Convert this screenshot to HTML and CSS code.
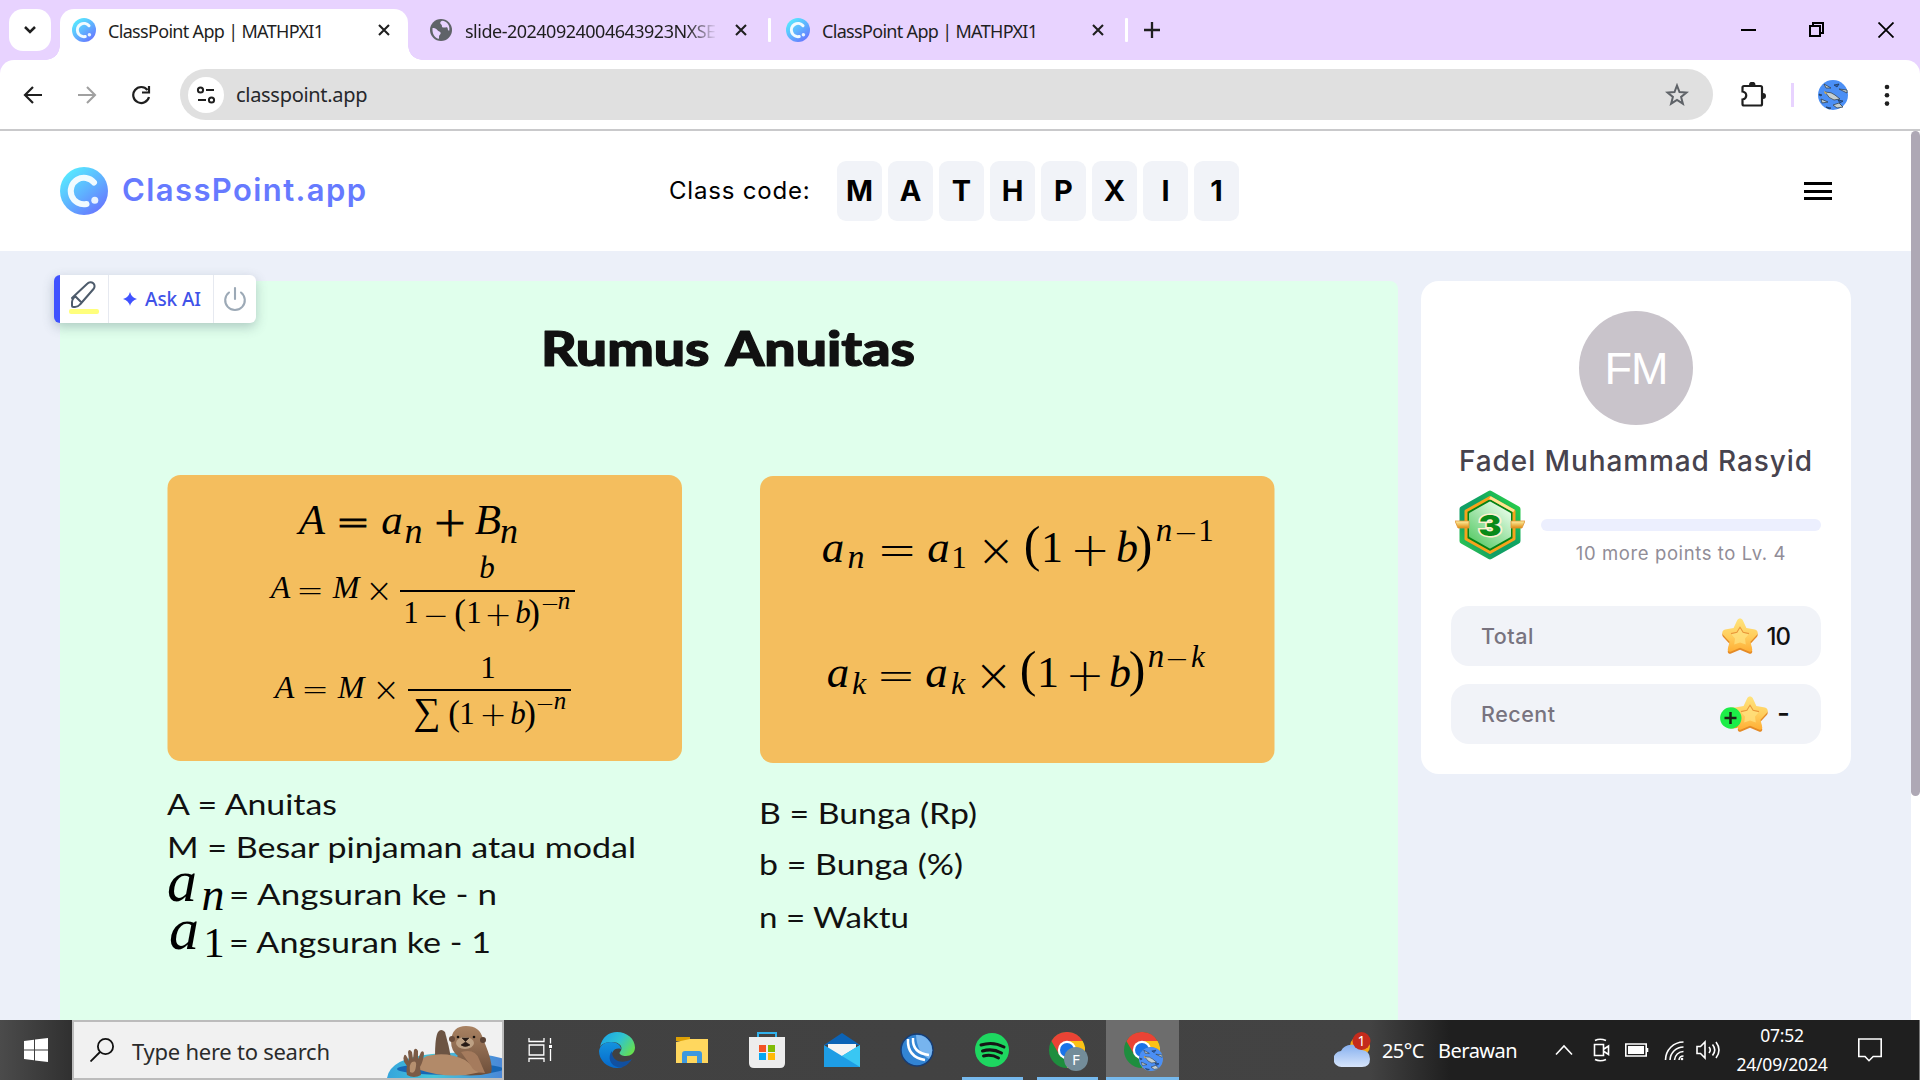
FILE: index.html
```html
<!DOCTYPE html>
<html lang="id">
<head>
<meta charset="utf-8">
<title>ClassPoint App | MATHPXI1</title>
<link rel="stylesheet" href="styles.css">
</head>
<body>
<svg class="defs" aria-hidden="true">
  <defs>
    <linearGradient id="cpGrad" x1="0.15" y1="0.1" x2="0.85" y2="0.95"><stop offset="0" stop-color="#57e9ff"/><stop offset="0.5" stop-color="#5fb2ff"/><stop offset="1" stop-color="#6774ff"/></linearGradient>
    <linearGradient id="starGrad" x1="0" y1="0" x2="0" y2="1"><stop offset="0" stop-color="#ffe37c"/><stop offset="0.55" stop-color="#ffcd5c"/><stop offset="1" stop-color="#ffae35"/></linearGradient>
    <symbol id="logo" viewBox="0 0 48 48"><circle cx="24" cy="24" r="24" fill="url(#cpGrad)"/><path d="M34 15.5A13.2 13.2 0 1 0 26.5 37" fill="none" stroke="#f1fbff" stroke-width="6" stroke-linecap="round"/><circle cx="34.8" cy="33.3" r="3.5" fill="#e9f3ff"/></symbol>
    <symbol id="cross" viewBox="0 0 12 12"><path d="M1 1l10 10M11 1L1 11" stroke="#1f1f1f" stroke-width="2.1" fill="none"/></symbol>
    <symbol id="star" viewBox="0 0 36 36"><path d="M15.200 4.200c1.200-2.300 4.400-2.300 5.600 0l3.600 7.700 8.500 1.500c2.700.6 3.700 3.500 1.900 5.500l-6.300 6.900 1.700 7.200c.3 2-1.500 3.300-3.300 2.600L18 31.700l-8.900 3.900c-1.800.7-3.600-.6-3.300-2.600l1.700-7.200-6.300-6.900c-1.800-2-.8-4.900 1.900-5.500l8.500-1.500z" fill="#e48a26"/><path d="M15.200 2.200c1.200-2.300 4.400-2.300 5.600 0l3.600 7.700 8.500 1.500c2.700.6 3.700 3.500 1.900 5.500l-6.300 6.900 1.700 7.200c.3 2-1.500 3.300-3.300 2.600L18 29.700l-8.900 3.900c-1.800.7-3.600-.6-3.300-2.600l1.700-7.200-6.300-6.900c-1.800-2-.8-4.900 1.900-5.500l8.500-1.500z" fill="url(#starGrad)"/><path d="M18 9l3.200 5.600 6 1.200-4.200 4.800.8 6L18 24.400l-5.800 2.200.8-6-4.200-4.800 6-1.200z" fill="#ffe27f" opacity=".75"/><path d="M9 15.600l5.900-1.300L18 9.300l3.100 5 5.900 1.300" fill="none" stroke="#e9983a" stroke-width="1.100"/></symbol>
    <symbol id="chrome" viewBox="0 0 36 36"><circle cx="18" cy="18" r="18" fill="#1e8e3e"/><path d="M2.400 9A18 18 0 0 1 33.600 9L18 10 10.200 22.500z" fill="#ea4335"/><path d="M33.600 9A18 18 0 0 1 18 36l7.800-13.500L18 9z" fill="#fbc116"/><circle cx="18" cy="18" r="9.200" fill="#fff"/><circle cx="18" cy="18" r="7" fill="#1a73e8"/></symbol>
    <symbol id="sharks" viewBox="0 0 30 30"><circle cx="15" cy="15" r="15" fill="#4b8ff5"/><path d="M7 12q7 0 10 3l5 4-6 1q-5-1-9-8zM6 4l7 4-5 0zM21 9l8 1v3zM3 19l7 3-6 1zM15 25l6-2 4 4-6 1z" fill="#c3ced1" stroke="#345" stroke-width=".8"/><path d="M16 5l5-1-2 3zM20 20l5 1-3 2zM1 14l3 1-2 1zM8 27l5 1-2 1z" fill="#2563c9" stroke="#234" stroke-width=".7"/><path d="M6 11l3 2-2 1z" fill="#e8b13c"/></symbol>
  </defs>
</svg>

<header class="browser">
  <div class="tabstrip">
    <button class="tab-search"><svg width="14" height="10" viewBox="0 0 14 10"><path d="M2 2l5 5 5-5" fill="none" stroke="#1f1f1f" stroke-width="2.500"/></svg></button>
    <div class="tab tab-active"><svg class="favicon"><use href="#logo"/></svg><span class="tab-title">ClassPoint App | MATHPXI1</span><svg class="tab-close"><use href="#cross"/></svg></div>
    <div class="tab tab-slide">
      <svg class="favicon" viewBox="0 0 24 24"><circle cx="12" cy="12" r="11" fill="#5f6368"/><path d="M3.500 10c2 0 4 .5 5 2.200.8 1.400 3 .8 3.200 2.700.1 1.600-1.700 1.800-1.700 3.600v2.300C6 20.300 3 16 3.500 10zM13 2.800c-2 1-2.300 2.600-1 3.500 1.600 1 .2 2.700 2 3.200 2 .4 3.200-.8 4.200 0s0 3 2 3.200c1.200-4.700-2-9.500-7.200-9.900z" fill="#e8d3ff"/></svg>
      <span class="tab-title fade">slide-20240924004643923NXSE</span><svg class="tab-close"><use href="#cross"/></svg>
    </div>
    <i class="tab-sep"></i>
    <div class="tab tab-third"><svg class="favicon"><use href="#logo"/></svg><span class="tab-title">ClassPoint App | MATHPXI1</span><svg class="tab-close"><use href="#cross"/></svg></div>
    <i class="tab-sep"></i>
    <svg class="new-tab" width="16" height="16" viewBox="0 0 16 16"><path d="M8 0v16M0 8h16" stroke="#1f1f1f" stroke-width="2.300"/></svg>
    <div class="win-controls">
      <svg width="16" height="16" viewBox="0 0 16 16"><path d="M0 8h15" stroke="#000" stroke-width="2"/></svg>
      <svg width="16" height="16" viewBox="0 0 16 16"><path d="M1 4h10v10H1zM4 4V1h10v10h-3" fill="none" stroke="#000" stroke-width="2"/></svg>
      <svg width="16" height="16" viewBox="0 0 16 16"><path d="M.5.5l15 15M15.500.5l-15 15" stroke="#000" stroke-width="1.800"/></svg>
    </div>
  </div>
  <div class="navbar">
    <svg class="nav-icon" width="20" height="20" viewBox="0 0 20 20"><path d="M10 2L2 10l8 8M2 10h17" fill="none" stroke="#1f1f1f" stroke-width="2.200"/></svg>
    <svg class="nav-icon" width="20" height="20" viewBox="0 0 20 20"><path d="M10 2l8 8-8 8M18 10H1" fill="none" stroke="#a0a0a0" stroke-width="2.100"/></svg>
    <svg class="nav-icon" width="20" height="20" viewBox="0 0 20 20"><path d="M16.500 5A8 8 0 1 0 18 12M18 1v6.500h-7" fill="none" stroke="#1f1f1f" stroke-width="2.200"/></svg>
    <div class="omnibox">
      <span class="site-info"><svg width="20" height="18" viewBox="0 0 20 18"><circle cx="4.500" cy="4" r="2.600"/><path d="M10 4h8M2 14h8"/><circle cx="15.500" cy="14" r="2.600"/></svg></span>
      <span class="url">classpoint.app</span>
      <svg class="bookmark" width="24" height="23" viewBox="0 0 24 23"><path d="M12 2.500l2.500 6.600 7 .4-5.400 4.400 1.800 6.800-5.900-3.800-5.900 3.800 1.800-6.800L2.500 9.500l7-.4z" fill="none" stroke="#5f6368" stroke-width="2"/></svg>
    </div>
    <svg class="extensions" width="26" height="26" viewBox="0 0 26 26"><path d="M2.500 5.500a1.500 1.500 0 0 1 1.500-1.500h16.500a1.500 1.500 0 0 1 1.500 1.500v16.500a1.500 1.500 0 0 1-1.500 1.500H4A1.500 1.500 0 0 1 2.500 22v-4.500c5-1 5-7 0-8z" fill="none" stroke="#1f1f1f" stroke-width="2.200"/><path d="M9 3a3.200 3.200 0 0 1 6.500 0zM23 11a3 3 0 0 1 0 6z" fill="#1f1f1f"/></svg>
    <i class="nav-sep"></i>
    <svg class="profile" width="30" height="30"><use href="#sharks"/></svg>
    <svg class="dots" width="6" height="24" viewBox="0 0 6 24"><g fill="#1f1f1f"><circle cx="3" cy="4" r="2.300"/><circle cx="3" cy="12.300" r="2.300"/><circle cx="3" cy="20.600" r="2.300"/></g></svg>
  </div>
</header>

<div class="viewport">
  <div class="page">
    <header class="app-header">
      <div class="brand"><svg width="48" height="48"><use href="#logo"/></svg><span>ClassPoint.app</span></div>
      <div class="class-code"><span class="code-label">Class code:</span><b>M</b><b>A</b><b>T</b><b>H</b><b>P</b><b>X</b><b>I</b><b>1</b></div>
      <button class="menu"><i></i><i></i><i></i></button>
    </header>

    <main class="content">
      <section class="slide">
        <svg class="slide-canvas" width="1338" height="739" viewBox="60 281 1338 739">
          <text class="title" x="541" y="366" textLength="374" lengthAdjust="spacingAndGlyphs">Rumus Anuitas</text>
          <rect x="167.500" y="475" width="514.500" height="286" rx="13" fill="#f4be5e"/>
          <rect x="760" y="476" width="514.500" height="287" rx="13" fill="#f4be5e"/>

          <!-- A = an + Bn -->
          <text class="math">
            <tspan class="v" x="312" y="534" font-size="43">A</tspan><tspan class="op mid" x="353" y="536" font-size="41">=</tspan><tspan class="v" x="392" y="534" font-size="43">a</tspan><tspan class="v" x="413.500" y="543" font-size="36">n</tspan><tspan class="op mid" x="450" y="536" font-size="41">+</tspan><tspan class="v" x="488" y="534" font-size="43">B</tspan><tspan class="v" x="509" y="543" font-size="36">n</tspan>
          </text>

          <!-- A = M × b / (1 − (1 + b)^−n) -->
          <text class="math">
            <tspan class="v" x="280.500" y="598" font-size="32">A</tspan><tspan class="op" x="310" y="601.500" font-size="33">=</tspan><tspan class="v" x="346" y="598" font-size="32">M</tspan><tspan class="op" x="379" y="601.500" font-size="33">×</tspan><tspan class="v" x="487" y="578" font-size="31">b</tspan><tspan class="n" x="411" y="623" font-size="31">1</tspan><tspan class="op" x="436" y="625.500" font-size="31">−</tspan><tspan class="n" x="460" y="624" font-size="35">(</tspan><tspan class="n" x="474" y="623" font-size="31">1</tspan><tspan class="op" x="498" y="625.500" font-size="33">+</tspan><tspan class="v" x="523" y="623" font-size="31">b</tspan><tspan class="n" x="534" y="624" font-size="35">)</tspan><tspan class="op" x="550" y="612" font-size="23">−</tspan><tspan class="v" x="564" y="609" font-size="25">n</tspan>
          </text>
          <path d="M400 591h175" stroke="#000" stroke-width="2"/>

          <!-- A = M × 1 / (Σ (1 + b)^−n) -->
          <text class="math">
            <tspan class="v" x="284.500" y="698" font-size="32">A</tspan><tspan class="op" x="315" y="701" font-size="33">=</tspan><tspan class="v" x="351" y="698" font-size="32">M</tspan><tspan class="op" x="386" y="701" font-size="33">×</tspan><tspan class="n" x="488" y="678" font-size="31">1</tspan><tspan class="n" x="427" y="724" font-size="38">∑</tspan><tspan class="n" x="454" y="725" font-size="35">(</tspan><tspan class="n" x="467" y="724" font-size="31">1</tspan><tspan class="op" x="493" y="726" font-size="33">+</tspan><tspan class="v" x="518" y="724" font-size="31">b</tspan><tspan class="n" x="530" y="725" font-size="35">)</tspan><tspan class="op" x="545" y="712" font-size="23">−</tspan><tspan class="v" x="560" y="709" font-size="25">n</tspan>
          </text>
          <path d="M408 690h163" stroke="#000" stroke-width="2"/>

          <!-- an = a1 × (1 + b)^(n−1) -->
          <text class="math">
            <tspan class="v" x="833" y="562" font-size="45">a</tspan><tspan class="v" x="856" y="568" font-size="34">n</tspan><tspan class="op" x="897" y="565.500" font-size="48">=</tspan><tspan class="v" x="938.500" y="562" font-size="45">a</tspan><tspan class="n" x="959" y="568" font-size="31">1</tspan><tspan class="op" x="996" y="565.500" font-size="46">×</tspan><tspan class="n" x="1032" y="561" font-size="50">(</tspan><tspan class="n" x="1052" y="562" font-size="44">1</tspan><tspan class="op" x="1090" y="565.500" font-size="48">+</tspan><tspan class="v" x="1127" y="562" font-size="44">b</tspan><tspan class="n" x="1144" y="561" font-size="50">)</tspan><tspan class="v" x="1164" y="541" font-size="33">n</tspan><tspan class="op" x="1186" y="543" font-size="29">−</tspan><tspan class="n" x="1206" y="541" font-size="31">1</tspan>
          </text>

          <!-- ak = ak × (1 + b)^(n−k) -->
          <text class="math">
            <tspan class="v" x="838" y="687" font-size="45">a</tspan><tspan class="v" x="859" y="694" font-size="32">k</tspan><tspan class="op" x="896" y="690.500" font-size="47">=</tspan><tspan class="v" x="936.500" y="687" font-size="45">a</tspan><tspan class="v" x="958" y="694" font-size="32">k</tspan><tspan class="op" x="993.500" y="690.500" font-size="46">×</tspan><tspan class="n" x="1028" y="686" font-size="50">(</tspan><tspan class="n" x="1048" y="687" font-size="44">1</tspan><tspan class="op" x="1085" y="690.500" font-size="47">+</tspan><tspan class="v" x="1120" y="687" font-size="44">b</tspan><tspan class="n" x="1137" y="686" font-size="50">)</tspan><tspan class="v" x="1156" y="667" font-size="33">n</tspan><tspan class="op" x="1177" y="669" font-size="29">−</tspan><tspan class="v" x="1198" y="667" font-size="31">k</tspan>
          </text>

          <text class="note" x="167" y="815" textLength="170" lengthAdjust="spacingAndGlyphs">A = Anuitas</text>
          <text class="note" x="167" y="858" textLength="469" lengthAdjust="spacingAndGlyphs">M = Besar pinjaman atau modal</text>
          <text class="math"><tspan class="v" x="182" y="901" font-size="60">a</tspan><tspan class="v" x="213" y="910" font-size="46">n</tspan></text>
          <text class="note" x="229" y="905" textLength="268" lengthAdjust="spacingAndGlyphs">= Angsuran ke - n</text>
          <text class="math"><tspan class="v" x="184" y="949" font-size="60">a</tspan><tspan class="n" x="214" y="957" font-size="43">1</tspan></text>
          <text class="note" x="229" y="953" textLength="262" lengthAdjust="spacingAndGlyphs">= Angsuran ke - 1</text>
          <text class="note" x="759" y="824" textLength="218" lengthAdjust="spacingAndGlyphs">B = Bunga (Rp)</text>
          <text class="note" x="759" y="875" textLength="204" lengthAdjust="spacingAndGlyphs">b = Bunga (%)</text>
          <text class="note" x="759" y="928" textLength="150" lengthAdjust="spacingAndGlyphs">n = Waktu</text>
        </svg>
        <div class="ai-bar">
          <span class="ai-pen"><svg width="32" height="40" viewBox="0 0 32 40"><path d="M4 19L19.500 4.500A4 4 0 0 1 25.500 10L12 25.500Q10 28 7 28H5.500Q4 28 4 26.500V23Q4 20.500 6 18.500M7.500 17.500l6 6" fill="none" stroke="#4d5b6b" stroke-width="2" stroke-linecap="round" stroke-linejoin="round"/><rect x="1" y="30" width="30" height="5" rx="2" fill="#ffff7c"/></svg></span>
          <span class="ai-ask"><svg width="14" height="14" viewBox="0 0 14 14"><path d="M7 0q1.500 5.500 7 7-5.500 1.500-7 7-1.500-5.500-7-7 5.500-1.500 7-7z" fill="#4052ff"/></svg>Ask AI</span>
          <span class="ai-power"><svg width="24" height="26" viewBox="0 0 24 26"><path d="M12 2v11M6 6.500a9.800 9.800 0 1 0 12 0" fill="none" stroke="#9ca9b6" stroke-width="2.100" stroke-linecap="round"/></svg></span>
        </div>
      </section>

      <aside class="profile-card">
        <div class="avatar">FM</div>
        <h2 class="name">Fadel Muhammad Rasyid</h2>
        <div class="level">
          <svg width="70" height="70" viewBox="0 0 70 70">
            <defs><linearGradient id="hexOuter" x1="0" y1="1" x2="1" y2="0"><stop offset="0" stop-color="#35d04b"/><stop offset=".3" stop-color="#119e66"/><stop offset=".6" stop-color="#0fa463"/><stop offset="1" stop-color="#30d843"/></linearGradient><linearGradient id="hexInner" x1=".2" y1="1" x2=".9" y2=".1"><stop offset="0" stop-color="#5ccc6b"/><stop offset="1" stop-color="#e4fbe5"/></linearGradient><linearGradient id="wing" x1="0" y1="0" x2="0" y2="1"><stop offset="0" stop-color="#fff2a4"/><stop offset="1" stop-color="#df8d13"/></linearGradient></defs>
            <path d="M35 3.500l27.500 15.500v32L35 66.500 7.500 51V19z" fill="url(#hexOuter)" stroke="url(#hexOuter)" stroke-width="6" stroke-linejoin="round"/>
            <path d="M35 7.500l24 13.500v28L35 62.500 11 49V21z" fill="#058315" stroke="#f6a31c" stroke-width="3" stroke-linejoin="round"/>
            <path d="M35 7.500l24 13.500" stroke="#ffe391" stroke-width="3"/>
            <path d="M35 13l19.500 11v22L35 57 15.500 46V24z" fill="url(#hexInner)" stroke="url(#hexInner)" stroke-width="3" stroke-linejoin="round"/>
            <path d="M0 31h14v7H3zM56 31h14l-3 7H56z" fill="url(#wing)" stroke="#df9332" stroke-width=".8"/>
            <text x="35" y="45.500" class="level-num" textLength="23" lengthAdjust="spacingAndGlyphs">3</text>
          </svg>
          <div class="progress"><i class="bar"></i><span>10 more points to Lv. 4</span></div>
        </div>
        <div class="stat"><span>Total</span><svg width="36" height="36"><use href="#star"/></svg><b>10</b></div>
        <div class="stat"><span>Recent</span><svg width="48" height="36" viewBox="0 0 48 36"><circle cx="13" cy="22" r="10.500" fill="#f89c16"/><use href="#star" x="12" width="36" height="36"/><circle cx="10.800" cy="22" r="10.700" fill="#1ded48"/><path d="M10.500 16v12M4.500 22h12" stroke="#1c2118" stroke-width="2.500"/></svg><b class="none">-</b></div>
      </aside>
    </main>
  </div>
  <div class="scrollbar"><i></i></div>
</div>

<footer class="taskbar">
  <div class="start"><svg width="24" height="24" viewBox="0 0 24 24"><path d="M0 3l10-1.300v9.800H0zM11 1.500L24 0v11.500H11zM0 12.500h10v9.800L0 21zM11 12.500h13V24l-13-1.500z" fill="#fff"/></svg></div>
  <div class="search">
    <svg class="lens" width="24" height="24" viewBox="0 0 24 24"><circle cx="15.500" cy="8.500" r="7.600" fill="none" stroke="#111" stroke-width="1.800"/><path d="M10 14L.5 23.500" stroke="#111" stroke-width="1.800"/></svg>
    <span>Type here to search</span>
    <svg class="otter" width="117" height="52" viewBox="0 0 117 52">
      <defs><linearGradient id="pool" x1="0" x2="1"><stop offset="0" stop-color="#35a5dc"/><stop offset=".4" stop-color="#47c5d9"/><stop offset="1" stop-color="#4a86d8"/></linearGradient><linearGradient id="fur" x1="0" y1="0" x2="0" y2="1"><stop offset="0" stop-color="#a98262"/><stop offset="1" stop-color="#6d4e3a"/></linearGradient></defs>
      <path d="M0 52Q3 32 45 28q45-4 72 5v19z" fill="url(#pool)"/><ellipse cx="63" cy="43" rx="53" ry="6" fill="#1766b4"/>
      <path d="M48 31q0-20 3-25 3-4 7 0 4 14 6 26z" fill="#6c5443"/>
      <path d="M64 15q1-15 15-15t17 13q11 25 8 34-20 5-42 0 0-10 9-17-7-5-7-15z" fill="url(#fur)"/>
      <path d="M33 44q-4-9 7-14 20-5 38 4l16 12q-30 8-61-2z" fill="#b28a69"/>
      <path d="M74 26q14-4 18 7l6 14q-11 0-14-7z" fill="#a57b5d"/>
      <path d="M20 49q-1-5 0-9-5-5-3-10 1-3 3 1l2 4-1-9q1-4 4 0l1 7 1-9q2-3 4 1v8l3-7q3-2 3 2-1 8-4 13l1 8q-7 4-14 0z" fill="#7b5b46"/><path d="M23 46q-1-8 2-10 5-2 4 4-1 9-6 6z" fill="#b6906f"/>
      <circle cx="65" cy="13" r="3" fill="#6b4d3b"/><circle cx="96" cy="14" r="3" fill="#5b4335"/><ellipse cx="78" cy="17" rx="9" ry="6" fill="#bda184"/><circle cx="71" cy="11" r="1.300" fill="#17110d"/><circle cx="87" cy="11" r="1.300" fill="#17110d"/><path d="M75 12h7l-3.500 3.500zM74 19q4 3 9 0l-4.500-3z" fill="#271b16" stroke="#271b16" stroke-width=".6"/>
    </svg>
  </div>
  <div class="apps">
    <div class="app task-view"><svg width="24" height="24" viewBox="0 0 24 24"><path d="M1 0v3.500h15V0M1 24v-3.500h15V24M1.200 7h14.600v10H1.200zM22.500 0v5.500M22.500 11v12" fill="none" stroke="#fff" stroke-width="1.300"/><path d="M21 7h3v3h-3z" fill="#fff"/></svg></div>
    <div class="app"><svg width="36" height="36" viewBox="0 0 36 36"><defs><linearGradient id="edgeA" x1="0" y1=".2" x2="1" y2=".7"><stop offset="0" stop-color="#1aa4e8"/><stop offset=".5" stop-color="#2fc3d2"/><stop offset="1" stop-color="#67e04e"/></linearGradient><linearGradient id="edgeB" x1="0" y1="0" x2="0" y2="1"><stop offset="0" stop-color="#1493de"/><stop offset="1" stop-color="#0669cb"/></linearGradient></defs><path d="M1 15C3 5 10 0 18 0c10 0 18 7 18 15.500 0 5-4 8.500-9 8.500-4 0-6.500-1.500-6.500-3 0-1 2-2 2-5s-4-6-9-6S3 11 1 15z" fill="url(#edgeA)"/><path d="M0 19C1 13 6 10 12 10c7 0 10 4 10 7-7-2-10 4-9 8 1 5 6 9 11 10-2 .7-4 1-6 1C8 36 0 28 0 19z" fill="url(#edgeB)"/><path d="M13 21c1 9 11 11 20 6-3 5-8 9-13 8.500C11 34 8 25 13 19z" fill="#1150a0"/></svg></div>
    <div class="app"><svg width="32" height="28" viewBox="0 0 32 28"><path d="M0 1h14v4H0z" fill="#dda005"/><path d="M0 6l14-3h18v24H0z" fill="#ffd75e"/><path d="M6 27V18q0-3 3-3h14q3 0 3 3v9h-5v-7H11v7z" fill="#3d98df"/></svg></div>
    <div class="app"><svg width="36" height="36" viewBox="0 0 36 36"><path d="M9 7V1h18v6" fill="none" stroke="#31b2ed" stroke-width="2"/><path d="M0 5h36v26q0 5-5 5H5q-5 0-5-5z" fill="#ededed"/><path d="M10 13h7v7h-7z" fill="#f35325"/><path d="M19 13h7v7h-7z" fill="#81bc06"/><path d="M10 21h7v7h-7z" fill="#05a6f0"/><path d="M19 21h7v7h-7z" fill="#ffba08"/></svg></div>
    <div class="app"><svg width="36" height="34" viewBox="0 0 36 34"><path d="M0 12L18 0l18 12z" fill="#0b63b6"/><path d="M4 11h28v13H4z" fill="#f4f4f4"/><path d="M0 12l18 11 18-11v22H0z" fill="#1e9de5"/><path d="M36 12v22L18 23z" fill="#39c7f3"/></svg></div>
    <div class="app"><svg width="34" height="34" viewBox="0 0 34 34"><circle cx="17" cy="17" r="16" fill="#3284d3" stroke="#173c73" stroke-width="1.500"/><path d="M16 2a15 15 0 0 1 13 24Q17 20 16 2z" fill="#77b4ee"/><path d="M8 6q-1 18 17 21M13 5q-1 15 16 17" fill="none" stroke="#fff" stroke-width="2.500"/></svg></div>
    <div class="app running"><svg width="34" height="34" viewBox="0 0 34 34"><circle cx="17" cy="17" r="17" fill="#1ed760"/><path d="M6 12q12-4 23 2M7.500 18q10-3 19 2M8.500 23q8-2 15 2" fill="none" stroke="#151515" stroke-width="3" stroke-linecap="round"/></svg></div>
    <div class="app running"><svg width="36" height="36"><use href="#chrome"/></svg><span class="badge">F</span></div>
    <div class="app running active"><svg width="36" height="36"><use href="#chrome"/></svg><svg class="badge" width="24" height="24"><use href="#sharks"/></svg></div>
  </div>
  <div class="tray">
    <svg class="weather" width="38" height="36" viewBox="0 0 38 36"><defs><linearGradient id="cloud" x1="0" y1="0" x2="0" y2="1"><stop offset="0" stop-color="#86b0ef"/><stop offset="1" stop-color="#d7e5fb"/></linearGradient></defs><circle cx="26" cy="14" r="10" fill="#f7a515"/><path d="M8 35a8 8 0 0 1-1-16 12 11 0 0 1 21-1q8 1 8 9t-8 8z" fill="url(#cloud)"/><circle cx="27.500" cy="9" r="9" fill="#c42b1c"/><text x="27.500" y="14" class="weather-count">1</text></svg>
    <span class="temp">25°C</span><span class="sky">Berawan</span>
    <svg class="chev" width="18" height="12" viewBox="0 0 18 12"><path d="M1 10.500L9 2l8 8.500"/></svg>
    <svg class="meet" width="18" height="24" viewBox="0 0 18 24"><path d="M2.500 6.500h9v11h-9zM12 11l4.500-3v8.500L12 13.500M3 2.500q5-2.500 11 0M3 21.500q5 2.500 11 0"/></svg>
    <svg class="battery" width="24" height="14" viewBox="0 0 24 14"><path d="M.8 1h20.400v12H.8zM22.500 5v4"/><path d="M3 3h16v8H3z" fill="#fff" stroke="none"/></svg>
    <svg class="wifi" width="21" height="20" viewBox="0 0 21 20"><path d="M1.500 19A18 18 0 0 1 19.500 1M6 19A13.500 13.500 0 0 1 19.500 6M10.500 19a9 9 0 0 1 9-8.500M15 19a4.500 4.500 0 0 1 4.500-4"/><circle cx="18" cy="18" r="1.300" fill="#fff" stroke="none"/></svg>
    <svg class="volume" width="24" height="20" viewBox="0 0 24 20"><path d="M1 6.500h3.500L9 2v16l-4.500-4.500H1zM13 7q2.500 3 0 6M16.500 4.500q4.500 5.500 0 11M20 2q6 8 0 16"/></svg>
    <div class="clock"><span>07:52</span><span>24/09/2024</span></div>
    <svg class="notify" width="24" height="24" viewBox="0 0 24 24"><path d="M.8 1h22.400v17.500h-8L11 22.700 7 18.500H.8z"/></svg>
  </div>
</footer>
</body>
</html>
```
FILE: styles.css
```css
* { box-sizing: border-box; }
body { margin: 0; width: 1920px; height: 1080px; overflow: hidden; display: flex; flex-direction: column; background: #fff; font-family: "Inter", sans-serif; }
svg { display: block; flex: none; }
button { border: 0; padding: 0; background: none; }
.defs { position: absolute; width: 0; height: 0; }

/* Browser window */
.browser { height: 131px; flex: none; background: #e8d3ff; border-bottom: 2px solid #c9c9cb; font-family: "Noto Sans", "Open Sans", sans-serif; }
.tabstrip { height: 60px; display: flex; align-items: center; }
.tab-search { width: 42px; height: 42px; margin-left: 9px; border-radius: 14px; background: #fff; display: grid; place-items: center; }
.tab { height: 51px; display: flex; align-items: center; align-self: flex-end; padding-bottom: 9px; }
.tab-active { position: relative; width: 348px; margin-left: 9px; padding-left: 12px; background: #fff; border-radius: 14px 14px 0 0; }
.tab-active::before, .tab-active::after { content: ""; position: absolute; bottom: 0; width: 14px; height: 14px; }
.tab-active::before { left: -14px; background: radial-gradient(circle at 0 0, transparent 13.5px, #fff 14px); }
.tab-active::after { right: -14px; background: radial-gradient(circle at 100% 0, transparent 13.5px, #fff 14px); }
.tab-slide { width: 360px; padding-left: 21px; }
.tab-third { width: 354px; padding-left: 15px; }
.favicon { width: 24px; height: 24px; }
.tab-title { width: 255px; margin-left: 12px; font-size: 18px; letter-spacing: -0.68px; line-height: 30px; color: #1f1f1f; white-space: nowrap; overflow: hidden; padding-top: 2px; }
.tab-close { width: 12px; height: 12px; margin-left: 15px; }
.fade { letter-spacing: -0.5px; -webkit-mask-image: linear-gradient(90deg, #000 222px, transparent 252px); mask-image: linear-gradient(90deg, #000 222px, transparent 252px); }
.tab-sep { width: 3px; height: 24px; background: #fff; border-radius: 1px; }
.new-tab { margin-left: 16px; }
.win-controls { margin-left: auto; margin-right: 26.5px; display: flex; gap: 52.5px; }
.navbar { height: 69px; background: #fff; border-radius: 14px 14px 0 0; display: flex; align-items: center; }
.nav-icon { margin-left: 23px; margin-right: 11px; }
.navbar .nav-icon:nth-child(3) { margin-right: 29px; }
.omnibox { width: 1533px; height: 51px; border-radius: 26px; background: #e0e0e0; display: flex; align-items: center; padding-left: 8px; }
.site-info { width: 36px; height: 36px; border-radius: 50%; background: #fff; display: grid; place-items: center; }
.site-info svg { fill: none; stroke: #1f1f1f; stroke-width: 2; }
.url { margin-left: 12px; font-size: 20px; letter-spacing: -0.3px; color: #26282b; }
.bookmark { margin-left: auto; margin-right: 24px; }
.extensions { margin-left: 27px; }
.nav-sep { width: 3px; height: 24px; margin-left: 25px; background: #e8d3ff; }
.profile { margin-left: 24px; }
.dots { margin-left: 36px; }

/* Page */
.viewport { height: 889px; flex: none; display: flex; }
.page { width: 1911px; background: #ecf0f9; }
.scrollbar { width: 9px; background: #fff; }
.scrollbar i { display: block; height: 665px; border-radius: 5px; background: #aea8b5; }
.app-header { height: 120px; background: #fff; display: grid; grid-template-columns: 609px 1fr 28px; align-items: center; padding: 0 79px 0 60px; }
.brand { display: flex; align-items: center; gap: 14px; color: #667aff; font-size: 31px; font-weight: 600; letter-spacing: 1.4px; }
.brand span { padding-bottom: 3px; }
.class-code { display: flex; align-items: center; gap: 6px; }
.code-label { width: 162px; font-size: 24px; letter-spacing: 0.8px; white-space: nowrap; padding-bottom: 1px; }
.class-code b { width: 45px; height: 60px; border-radius: 9px; background: #f1f3f8; display: grid; place-items: center; font-size: 29px; font-weight: 650; padding-bottom: 1px; }
.menu { height: 18px; display: flex; flex-direction: column; justify-content: space-between; }
.menu i { width: 28px; height: 3px; background: #000; }
.content { display: flex; gap: 23px; align-items: flex-start; padding: 30px 60px 0; }
.slide { position: relative; width: 1338px; height: 739px; background: #e0ffec; border-radius: 8px 8px 0 0; }
.title { font: 900 47px "Lato", sans-serif; fill: #111; stroke: #111; stroke-width: 1.2px; stroke-linejoin: round; word-spacing: 4px; }
.math { text-anchor: middle; fill: #000; }
.v { font-family: "Liberation Serif", serif; font-style: italic; }
.n { font-family: "Liberation Serif", serif; }
.op { font-family: "DejaVu Sans", sans-serif; font-weight: 200; }
.mid { stroke: #000; stroke-width: 1px; }
.note { font: 400 29px "Lato", sans-serif; fill: #111; }
.ai-bar { position: absolute; left: -6px; top: -6px; width: 202px; height: 48px; display: flex; background: #fff; border-left: 6px solid #4052ff; border-radius: 6px; box-shadow: 0 4px 12px rgba(60, 80, 100, .3); }
.ai-bar span { display: flex; align-items: center; justify-content: center; }
.ai-pen { width: 48px; }
.ai-ask { width: 106px; gap: 8px; border: solid #e6e9f0; border-width: 0 1px; padding-left: 2px; color: #4052e8; font: 500 19px "Noto Sans", sans-serif; letter-spacing: -0.1px; }
.ai-power { flex: 1; }

.profile-card { width: 430px; height: 493px; padding: 30px; background: #fff; border-radius: 18px; }
.avatar { width: 114px; height: 114px; margin: 0 auto; border-radius: 50%; background: #c9c4cb; color: #fff; display: grid; place-items: center; font: 45px "Liberation Sans", sans-serif; letter-spacing: -1px; padding: 1px 0 0; }
.name { margin: 18px -20px 0; text-align: center; font-size: 28px; font-weight: 500; line-height: 36px; letter-spacing: 0.9px; color: #47434e; white-space: nowrap; }
.level { display: flex; margin: 11px 0 0 4px; height: 70px; }
.level-num { text-anchor: middle; font: 900 28px "Inter", sans-serif; fill: #078a18; stroke: #fff0d0; stroke-width: 3px; paint-order: stroke; }
.progress { width: 280px; margin: 29px 0 0 16px; text-align: center; font-size: 18.5px; letter-spacing: 0.6px; color: #918d97; white-space: nowrap; }
.bar { display: block; height: 12px; margin-bottom: 10px; border-radius: 6px; background: #eceffe; }
.progress span { line-height: 24px; }
.stat { height: 60px; margin-bottom: 18px; padding: 0 31px 0 30px; background: #f1f3f8; border-radius: 18px; display: flex; align-items: center; color: #78737f; font-size: 21.500px; font-weight: 500; letter-spacing: .5px; }
.level + .stat { margin-top: 46px; }
.stat svg { margin-left: auto; }
.stat b { margin-left: 9px; color: #111; font-size: 24px; font-weight: 500; letter-spacing: -1px; }
.stat .none { width: 13px; font-size: 28px; margin-top: -3px; }

/* Taskbar */
.taskbar { height: 60px; flex: none; display: flex; color: #fff; background: linear-gradient(90deg, #404040 0, #434343 1370px, #1f1f1f 1450px); font-family: "Noto Sans", "Open Sans", sans-serif; }
.start { width: 72px; display: grid; place-items: center; background: linear-gradient(90deg, #4b4b4b, #303030); }
.search { width: 432px; height: 60px; border: 2px solid #bcbcbc; background: #f1f1f1; display: flex; align-items: center; overflow: hidden; color: #2b2b2b; font-size: 22px; letter-spacing: -0.25px; padding-left: 16px; }
.search span { padding-top: 1px; }
.lens { margin-right: 18px; }
.otter { margin: 4px -2px 0 auto; }
.apps { display: flex; }
.app { position: relative; width: 75px; height: 60px; display: grid; place-items: center; }
.task-view { padding-right: 3px; }
.running::after { content: ""; position: absolute; left: 8px; right: 6px; bottom: 0; height: 3px; background: #76b9ed; }
.active { background: linear-gradient(90deg, transparent 2px, #6d6d6d 2px); }
.active::after { left: 2px; right: 0; }
.badge { position: absolute; left: 35px; top: 27px; width: 24px; height: 24px; border-radius: 50%; background: #738c99; font-size: 15px; line-height: 24px; text-align: center; }
.tray { display: flex; align-items: center; width: 733px; margin-left: 8px; padding-left: 147px; border-right: 1px solid #777; }
.tray > svg:not(.weather) { fill: none; stroke: #fff; stroke-width: 1.6; }
.weather { width: 38px; }
.weather-count { font-size: 14px; fill: #fff; text-anchor: middle; }
.temp { width: 56px; margin-left: 10px; font-size: 20px; letter-spacing: -0.6px; white-space: nowrap; padding-top: 1px; }
.sky { width: 117px; font-size: 20px; letter-spacing: -0.5px; padding-top: 1px; }
.meet { margin-left: 19px; }
.battery { margin-left: 15px; }
.wifi { margin-left: 15px; margin-top: 2px; }
.volume { margin-left: 11px; }
.clock { width: 104px; margin-left: 10px; display: flex; flex-direction: column; align-items: center; font-size: 17.5px; line-height: 29px; letter-spacing: -0.2px; white-space: nowrap; }
.notify { margin-left: 24px; }
```
